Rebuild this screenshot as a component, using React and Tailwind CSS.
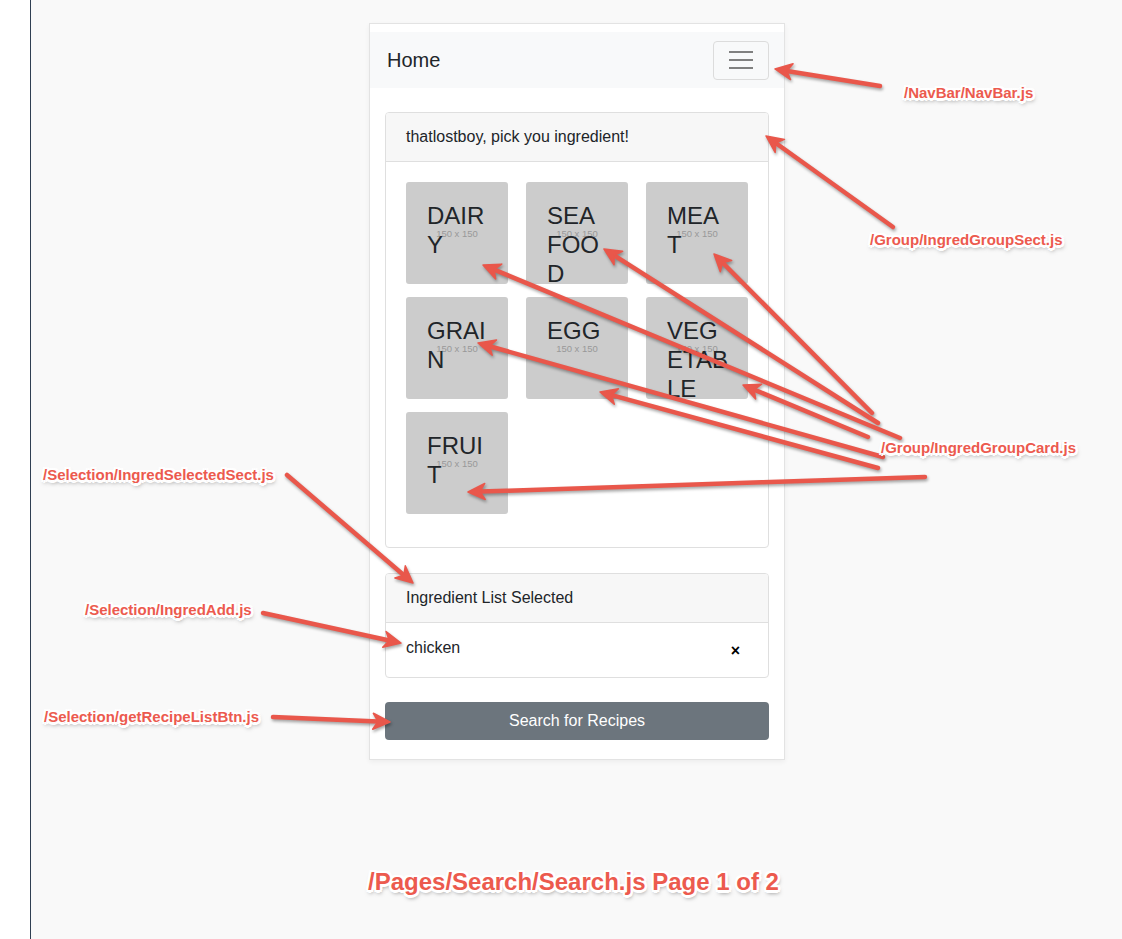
import React from 'react';

const groups = ['DAIRY', 'SEA FOOD', 'MEAT', 'GRAIN', 'EGG', 'VEGETABLE', 'FRUIT'];

const labelShadow =
  '[text-shadow:-2px_-2px_0_#fff,2px_-2px_0_#fff,-2px_2px_0_#fff,2px_2px_0_#fff,0_2.5px_0_#fff,0_-2.5px_0_#fff,2.5px_0_0_#fff,-2.5px_0_0_#fff,1px_3px_4px_rgba(0,0,0,0.5)]';

// tail -> head, in page pixels
const arrows = [
  [880, 86, 775, 69],
  [893, 227, 766, 136],
  [872, 413, 714, 254],
  [878, 423, 604, 249],
  [900, 438, 483, 265],
  [868, 437, 743, 385],
  [883, 457, 478, 343],
  [878, 468, 600, 392],
  [925, 477, 468, 492],
  [287, 475, 413, 583],
  [263, 613, 401, 643],
  [273, 717, 390, 722],
];

const Arrow = ({ x1, y1, x2, y2 }) => {
  const len = Math.hypot(x2 - x1, y2 - y1);
  const ux = (x2 - x1) / len;
  const uy = (y2 - y1) / len;
  const nx = -uy;
  const ny = ux;
  const bx = x2 - ux * 17;
  const by = y2 - uy * 17;
  const kx = x2 - ux * 12;
  const ky = y2 - uy * 12;
  const pts = [
    [x2, y2],
    [bx + nx * 8, by + ny * 8],
    [kx, ky],
    [bx - nx * 8, by - ny * 8],
  ]
    .map((p) => p.join(','))
    .join(' ');
  return (
    <g>
      <line x1={x1} y1={y1} x2={kx} y2={ky} stroke="#e9574b" strokeWidth="4.5" strokeLinecap="round" />
      <polygon points={pts} fill="#e9574b" stroke="#e9574b" strokeWidth="1.5" strokeLinejoin="round" />
    </g>
  );
};

const Label = ({ className, children }) => (
  <div className={`absolute whitespace-nowrap font-bold text-[#ec5a4e] ${labelShadow} ${className}`}>
    {children}
  </div>
);

const GroupTile = ({ name }) => (
  <div className="relative h-[102px] rounded-[3px] bg-[#cccccc] pl-5 pt-5">
    <div className="absolute inset-0 flex items-center justify-center pt-[3px] text-[9.5px] text-[#999999]">150 x 150</div>
    <div className="relative w-[64px] break-all pl-px text-[24px] leading-[1.2] text-[#212529]">{name}</div>
  </div>
);

export default function App() {
  return (
    <div className="relative flex h-[939px] w-[1122px] overflow-hidden bg-[#f9f9f9] font-['Liberation_Sans',Arial,sans-serif] text-[#212529]">
      <div className="w-[31px] shrink-0 border-r border-[#2f3f52] bg-white" />

      <div className="pl-[338px] pt-[23px]">
        <div className="w-[416px] border border-[#e3e3e3] bg-white pb-[19px] pt-2 shadow-[0_2px_5px_rgba(0,0,0,0.05)]">
          <nav className="flex h-[56px] items-center justify-between bg-[#f8f9fa] pl-[17px] pr-[15px]">
            <span className="text-[20px] leading-none">Home</span>
            <button className="flex h-[39px] w-[56px] flex-col items-center justify-center gap-[6px] rounded-[4px] border border-[#dcdcdc]">
              <span className="h-[2px] w-[24px] bg-[#808080]" />
              <span className="h-[2px] w-[24px] bg-[#808080]" />
              <span className="h-[2px] w-[24px] bg-[#808080]" />
            </button>
          </nav>

          <div className="px-[15px] pt-6">
            <div className="overflow-hidden rounded-[4px] border border-[#dfdfdf]">
              <div className="border-b border-[#dfdfdf] bg-[#f7f7f7] px-5 py-3 text-base leading-6">
                thatlostboy, pick you ingredient!
              </div>
              <div className="grid grid-cols-3 gap-x-[18px] gap-y-[13px] px-5 pb-[33px] pt-5">
                {groups.map((g) => (
                  <GroupTile key={g} name={g} />
                ))}
              </div>
            </div>

            <div className="mt-[25px] overflow-hidden rounded-[4px] border border-[#dfdfdf]">
              <div className="border-b border-[#dfdfdf] bg-[#f7f7f7] px-5 py-3 text-base leading-6">
                Ingredient List Selected
              </div>
              <div className="flex items-start px-5 pb-[17px] pt-[13px] text-base leading-6">
                <span>chicken</span>
                <span className="ml-auto mr-2 mt-[7px] text-[16px] font-bold leading-none text-black">×</span>
              </div>
            </div>

            <button className="mt-6 h-[38px] w-full rounded-[4px] bg-[#6c757d] text-base text-white">
              Search for Recipes
            </button>
          </div>
        </div>
      </div>

      <svg
        className="pointer-events-none absolute left-0 top-0 drop-shadow-[1px_2px_1.5px_rgba(0,0,0,0.35)]"
        width="1122"
        height="939"
        viewBox="0 0 1122 939"
      >
        {arrows.map(([x1, y1, x2, y2], i) => (
          <Arrow key={i} x1={x1} y1={y1} x2={x2} y2={y2} />
        ))}
      </svg>

      <Label className="left-[904px] top-[84px] text-[15px] leading-[18px]">/NavBar/NavBar.js</Label>
      <Label className="left-[870px] top-[231px] text-[15px] leading-[18px]">/Group/IngredGroupSect.js</Label>
      <Label className="left-[881px] top-[439px] text-[15px] leading-[18px]">/Group/IngredGroupCard.js</Label>
      <Label className="left-[43px] top-[466px] text-[15px] leading-[18px]">/Selection/IngredSelectedSect.js</Label>
      <Label className="left-[85px] top-[601px] text-[15px] leading-[18px]">/Selection/IngredAdd.js</Label>
      <Label className="left-[44px] top-[708px] text-[15px] leading-[18px]">/Selection/getRecipeListBtn.js</Label>
      <Label className="left-[368px] top-[868px] text-[24px] leading-[28px]">/Pages/Search/Search.js Page 1 of 2</Label>
    </div>
  );
}
